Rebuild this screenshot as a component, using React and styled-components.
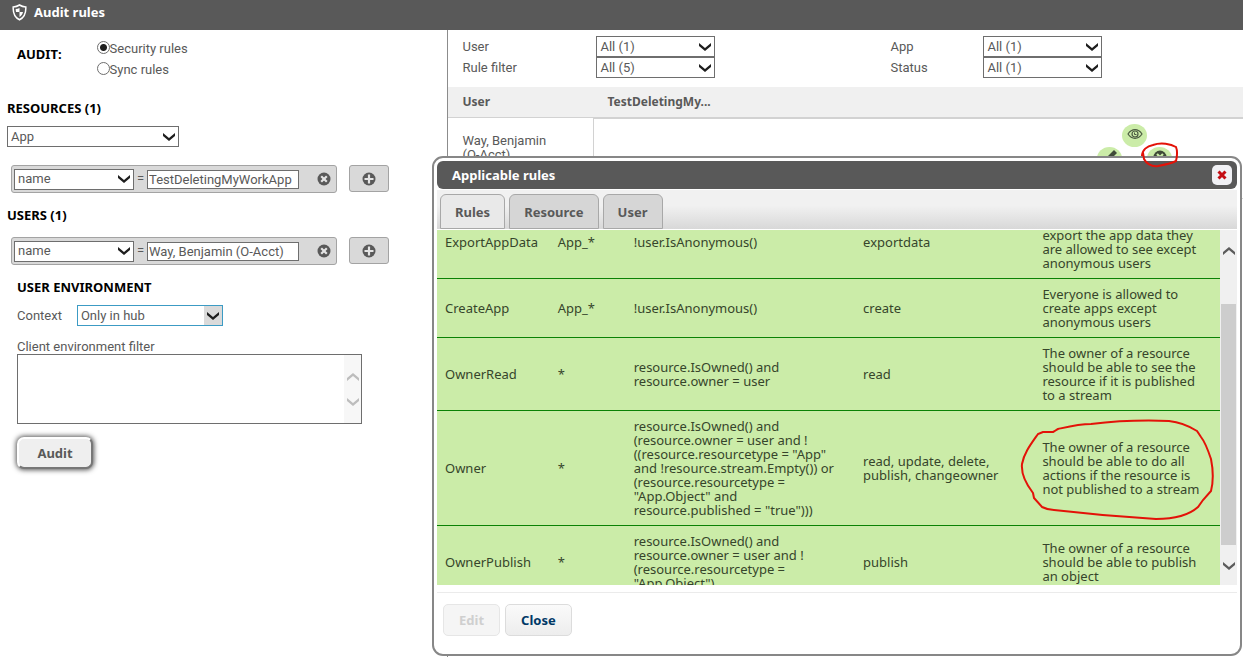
import { useLayoutEffect, useRef } from 'react';
import styled, { createGlobalStyle } from 'styled-components';

const COLORS = {
  Bar: '#595959',
  Text: '#595959',
  Border: '#6e6e6e',
  Chip: '#d9d9d9',
  Green: '#cbeca8',
  GreenLine: '#0a8205',
  Red: '#e31208',
};

const RULES = [
  {
    name: 'ExportAppData',
    filter: 'App_*',
    condition: '!user.IsAnonymous()',
    actions: 'exportdata',
    description:
      'Everyone is allowed to\nexport the app data they\nare allowed to see except\nanonymous users',
  },
  {
    name: 'CreateApp',
    filter: 'App_*',
    condition: '!user.IsAnonymous()',
    actions: 'create',
    description: 'Everyone is allowed to\ncreate apps except\nanonymous users',
  },
  {
    name: 'OwnerRead',
    filter: '*',
    condition: 'resource.IsOwned() and\nresource.owner = user',
    actions: 'read',
    description:
      'The owner of a resource\nshould be able to see the\nresource if it is published\nto a stream',
  },
  {
    name: 'Owner',
    filter: '*',
    condition:
      'resource.IsOwned() and\n(resource.owner = user and !\n((resource.resourcetype = "App"\nand !resource.stream.Empty()) or\n(resource.resourcetype =\n"App.Object" and\nresource.published = "true")))',
    actions: 'read, update, delete,\npublish, changeowner',
    description:
      'The owner of a resource\nshould be able to do all\nactions if the resource is\nnot published to a stream',
  },
  {
    name: 'OwnerPublish',
    filter: '*',
    condition:
      'resource.IsOwned() and\nresource.owner = user and !\n(resource.resourcetype =\n"App.Object")',
    actions: 'publish',
    description:
      'The owner of a resource\nshould be able to publish\nan object',
  },
];

function Chevron({ up, color = '#1e1e1e' }) {
  return (
    <svg width="12" height="8" viewBox="0 0 12 8" aria-hidden="true">
      <path
        d={up ? 'M0 8V5L6 0l6 5v3L6 3z' : 'M0 0v3l6 5 6-5V0L6 5z'}
        fill={color}
      />
    </svg>
  );
}

function Select({ id, label, value, width, active }) {
  return (
    <SelectBox $width={width} $active={active}>
      <NativeSelect id={id} aria-label={label} defaultValue={value}>
        <option>{value}</option>
      </NativeSelect>
      <SelectArrow $active={active}>
        <Chevron />
      </SelectArrow>
    </SelectBox>
  );
}

function Condition({ label, value }) {
  return (
    <ConditionRow>
      <ConditionBox>
        <Select label={`${label} property`} value="name" width={120} />
        <Equals>=</Equals>
        <ValueInput aria-label={`${label} value`} defaultValue={value} />
        <RemoveButton aria-label={`Remove ${label} condition`}>
          <svg width="14" height="14" viewBox="0 0 14 14">
            <circle cx="7" cy="7" r="6.5" fill={COLORS.Bar} />
            <path
              d="M4.2 4.2l5.6 5.6M9.8 4.2L4.2 9.8"
              stroke="#e4e4e4"
              strokeWidth="2.2"
            />
          </svg>
        </RemoveButton>
      </ConditionBox>
      <AddButton aria-label={`Add ${label} condition`}>
        <svg width="14" height="14" viewBox="0 0 14 14">
          <circle cx="7" cy="7" r="6.5" fill={COLORS.Bar} />
          <path d="M7 2.5v9M2.5 7h9" stroke="#e4e4e4" strokeWidth="2.2" />
        </svg>
      </AddButton>
    </ConditionRow>
  );
}

function Sidebar() {
  return (
    <Side>
      <AuditType>
        <AuditLegend>AUDIT:</AuditLegend>
        <div>
          <RadioLabel>
            <Radio name="audit" defaultChecked />
            Security rules
          </RadioLabel>
          <RadioLabel>
            <Radio name="audit" />
            Sync rules
          </RadioLabel>
        </div>
      </AuditType>

      <Heading>RESOURCES (1)</Heading>
      <ResourceType>
        <Select label="Resource type" value="App" width={172} />
      </ResourceType>
      <Condition label="resource" value="TestDeletingMyWorkApp" />

      <Heading>USERS (1)</Heading>
      <Condition label="user" value="Way, Benjamin (O-Acct)" />

      <Environment>
        <Heading>USER ENVIRONMENT</Heading>
        <ContextRow>
          <label htmlFor="context">Context</label>
          <Select id="context" value="Only in hub" width={146} active />
        </ContextRow>
        <FilterLabel htmlFor="env-filter">Client environment filter</FilterLabel>
        <FilterBox>
          <FilterArea id="env-filter" />
          <FilterGutter>
            <Chevron up color="#bdbdbd" />
            <Chevron color="#bdbdbd" />
          </FilterGutter>
        </FilterBox>
        <AuditButton>Audit</AuditButton>
      </Environment>
    </Side>
  );
}

function Results() {
  return (
    <Pane>
      <Filters>
        <label htmlFor="f-user">User</label>
        <Select id="f-user" value="All (1)" width={119} />
        <label htmlFor="f-app">App</label>
        <Select id="f-app" value="All (1)" width={119} />
        <label htmlFor="f-rule">Rule filter</label>
        <Select id="f-rule" value="All (5)" width={119} />
        <label htmlFor="f-status">Status</label>
        <Select id="f-status" value="All (1)" width={119} />
      </Filters>
      <Matrix>
        <thead>
          <tr>
            <th>User</th>
            <th>TestDeletingMy...</th>
          </tr>
        </thead>
        <tbody>
          <tr>
            <td>
              Way, Benjamin
              <br />
              (O-Acct)
            </td>
            <td>
              <Actions>
                <ActionButton $area="view" aria-label="Read">
                  <svg width="16" height="12" viewBox="0 0 16 12">
                    <path
                      d="M1 6c2-3 4.5-4.3 7-4.3S13 3 15 6c-2 3-4.5 4.3-7 4.3S3 9 1 6z"
                      fill="none"
                      stroke="#4a5a40"
                      strokeWidth="1.2"
                    />
                    <circle
                      cx="8"
                      cy="6"
                      r="3"
                      fill="none"
                      stroke="#4a5a40"
                      strokeWidth="1.2"
                    />
                    <path d="M7.5 4.5v2h2" fill="none" stroke="#4a5a40" />
                  </svg>
                </ActionButton>
                <ActionButton $area="edit" aria-label="Update">
                  <svg width="16" height="16" viewBox="0 0 16 16">
                    <path d="M1 15l1.5-4.5L12 1l3 3-9.500 9.500z" fill="#3f4a38" />
                  </svg>
                </ActionButton>
                <ActionButton $area="remove" aria-label="Delete">
                  <svg width="14" height="14" viewBox="0 0 14 14">
                    <circle cx="7" cy="7" r="6.5" fill="#3f4a38" />
                    <path
                      d="M4 4l6 6M10 4l-6 6"
                      stroke={COLORS.Green}
                      strokeWidth="2.2"
                    />
                  </svg>
                </ActionButton>
              </Actions>
            </td>
          </tr>
        </tbody>
      </Matrix>
    </Pane>
  );
}

function RulesTable() {
  const viewport = useRef(null);

  useLayoutEffect(() => {
    viewport.current.scrollTop = 24;
  }, []);

  return (
    <Scroller>
      <Viewport ref={viewport}>
        <Table>
          <colgroup>
            <col width="14.4%" />
            <col width="9.7%" />
            <col width="29.3%" />
            <col width="22.9%" />
            <col />
          </colgroup>
          <tbody>
            {RULES.map((rule) => (
              <tr key={rule.name}>
                <td>{rule.name}</td>
                <td>{rule.filter}</td>
                <td>{rule.condition}</td>
                <td>{rule.actions}</td>
                <td>{rule.description}</td>
              </tr>
            ))}
          </tbody>
        </Table>
      </Viewport>
      <ScrollTrack aria-hidden="true">
        <Chevron up color="#5c5c5c" />
        <ScrollThumb />
        <Chevron color="#5c5c5c" />
      </ScrollTrack>
    </Scroller>
  );
}

function RulesDialog() {
  return (
    <Dialog role="dialog" aria-labelledby="dialog-title">
      <TitleBar>
        <h2 id="dialog-title">Applicable rules</h2>
        <CloseIcon aria-label="Close dialog">
          <svg width="10" height="10" viewBox="0 0 10 10">
            <path
              d="M1.5 1.5l7 7M8.5 1.5l-7 7"
              stroke="#c40d14"
              strokeWidth="3"
            />
          </svg>
        </CloseIcon>
      </TitleBar>
      <Tabs role="tablist">
        <Tab role="tab" aria-selected="true" $selected>
          Rules
        </Tab>
        <Tab role="tab">Resource</Tab>
        <Tab role="tab">User</Tab>
      </Tabs>
      <RulesTable />
      <Footer>
        <FooterButton disabled>Edit</FooterButton>
        <FooterButton>Close</FooterButton>
      </Footer>

      <SmallMark width="40" height="28" viewBox="0 0 40 28">
        <path d="M2 15C2 9 7 5 13 4c8-3 18-1 23 2 2 5 1 10 0 14-6 3-12 4-18 5C11 26 6 22 4 18L3 12" />
      </SmallMark>
      <LargeMark width="200" height="106" viewBox="0 0 200 106">
        <path d="M25 13l-5 2C13 25 6 34 4 45c-1 10 4 20 11 29l1 5 8 9c4 2 8 3 12 3 34 4 68 7 102 9 16 0 32-3 42-12l5-7 8-9c3-12 2-22 0-32-3-9-6-17-10-22l-4-6c-8-5-18-9-28-10-26-1-53 0-78 3-12 0-24 3-33 5-2 1-3 2-5 3z" />
      </LargeMark>
    </Dialog>
  );
}

function App() {
  return (
    <Page>
      <GlobalStyle />
      <TopBar>
        <svg width="15" height="17" viewBox="0 0 15 17" aria-hidden="true">
          <path
            d="M7.5 1C5.500 2.300 3.500 2.900 1.200 3c-.3 6 1.300 10.500 6.300 12.800C12.500 13.500 14.100 9 13.800 3 11.500 2.900 9.500 2.300 7.500 1z"
            fill="none"
            stroke="#fff"
            strokeWidth="1.5"
          />
          <path
            d="M7.5 4v4H4c-.2-1.200-.3-2-.3-3 1.500-.1 2.600-.4 3.800-1zM7.500 8H11c-.4 2-1.500 3.700-3.500 5z"
            fill="#fff"
          />
        </svg>
        <h1>Audit rules</h1>
      </TopBar>
      <Main>
        <Sidebar />
        <Results />
      </Main>
      <RulesDialog />
    </Page>
  );
}

const GlobalStyle = createGlobalStyle`
  * {
    box-sizing: border-box;
  }

  body {
    margin: 0;
    background: #fff;
    color: ${COLORS.Text};
    font: 13px/14px Roboto, sans-serif;
  }

  h1, h2, h3 {
    margin: 0;
  }

  button, input, select, textarea {
    margin: 0;
    color: inherit;
    font: inherit;
  }

  svg {
    display: block;
  }
`;

const Page = styled.div`
  position: relative;
  display: flex;
  flex-direction: column;
  min-height: 100vh;
`;

const TopBar = styled.header`
  display: flex;
  align-items: center;
  gap: 7px;
  height: 30px;
  padding: 0 12px 6px;
  background: ${COLORS.Bar};
  color: #fff;

  h1 {
    font: bold 13px/16px 'Noto Sans', sans-serif;
  }
`;

const Main = styled.main`
  flex: 1;
  display: grid;
  grid-template-columns: 36% 1fr;
`;

const Side = styled.section`
  padding: 8px 7px;
`;

const AuditType = styled.div`
  display: flex;
  gap: 35px;
  padding: 0 10px 6px;
`;

const Heading = styled.h3`
  padding: 14px 0 10px;
  color: #000;
  font: bold 13px/16px 'Noto Sans', sans-serif;
`;

const AuditLegend = styled(Heading)`
  padding: 8px 0 0;
`;

const RadioLabel = styled.label`
  display: flex;
  align-items: center;
  height: 21px;
`;

const Radio = styled.input.attrs({ type: 'radio' })`
  appearance: none;
  width: 13px;
  height: 13px;
  margin-bottom: 3px;
  border: 1px solid ${COLORS.Border};
  border-radius: 50%;

  &:checked {
    background: radial-gradient(circle, #1e1e1e 3px, #fff 4px);
  }
`;

const ResourceType = styled.div`
  padding-bottom: 14px;
`;

const SelectBox = styled.span`
  position: relative;
  display: block;
  flex: none;
  width: ${(p) => p.$width}px;
  height: 21px;
  border: 1px solid ${(p) => (p.$active ? '#3c9bc4' : COLORS.Border)};
  background: #fff;
`;

const NativeSelect = styled.select`
  appearance: none;
  display: block;
  width: 100%;
  height: 100%;
  padding: 0 20px 0 3px;
  border: none;
  background: transparent;
`;

const SelectArrow = styled.span`
  position: absolute;
  top: 0;
  right: 0;
  bottom: 0;
  display: grid;
  place-items: center;
  width: 18px;
  background: ${(p) => (p.$active ? '#dadada' : 'transparent')};
  pointer-events: none;
`;

const ConditionRow = styled.div`
  display: flex;
  gap: 12px;
  padding: 4px 4px 0;
`;

const ConditionBox = styled.div`
  display: flex;
  align-items: center;
  width: 326px;
  height: 28px;
  padding: 0 2px;
  border: 1px solid #a3a3a3;
  border-radius: 3px;
  background: ${COLORS.Chip};
`;

const Equals = styled.span`
  width: 13px;
  text-align: center;
`;

const ValueInput = styled.input`
  width: 152px;
  height: 19px;
  padding: 0 1px;
  border: 1px solid ${COLORS.Border};
  background: #fff;
`;

const RemoveButton = styled.button`
  margin-left: auto;
  padding: 0 3px;
  border: none;
  background: transparent;
`;

const AddButton = styled.button`
  display: grid;
  place-items: center;
  width: 40px;
  height: 27px;
  padding: 0;
  border: 1px solid #a3a3a3;
  border-radius: 3px;
  background: ${COLORS.Chip};
`;

const Environment = styled.div`
  padding: 0 10px;
`;

const ContextRow = styled.div`
  display: flex;
  align-items: center;
  gap: 15px;
`;

const FilterLabel = styled.label`
  display: block;
  margin-top: 14px;
`;

const FilterBox = styled.div`
  display: flex;
  width: 345px;
  height: 70px;
  border: 1px solid ${COLORS.Border};
`;

const FilterArea = styled.textarea`
  flex: 1;
  border: none;
  resize: none;
`;

const FilterGutter = styled.div`
  display: flex;
  flex-direction: column;
  align-items: center;
  justify-content: center;
  gap: 17px;
  width: 17px;
  background: #f7f7f7;
`;

const AuditButton = styled.button`
  width: 76px;
  height: 32px;
  margin-top: 13px;
  border: 2px solid;
  border-color: #fff #777 #777 #fff;
  border-radius: 7px;
  background: #efefef;
  box-shadow: 0 0 5px 1px #555;
  font: bold 13px/16px 'Noto Sans', sans-serif;
`;

const Pane = styled.section`
  border-left: 1px solid #8c8c8c;
`;

const Filters = styled.div`
  display: grid;
  grid-template-columns: 134px 294px 93px 1fr;
  align-items: center;
  padding: 6px 14px 9px;
`;

const Matrix = styled.table`
  width: 100%;
  border-spacing: 0;
  text-align: left;

  th {
    height: 31px;
    padding: 0 14px;
    border-bottom: 1px solid #d2d2d2;
    background: #f0f0f0;
    font: bold 12px/14px 'Noto Sans', sans-serif;
  }

  td {
    height: 81px;
    padding: 16px 14px;
    border-bottom: 1px solid #d2d2d2;
    vertical-align: top;
  }

  th:first-child,
  td:first-child {
    width: 145px;
  }

  td + td {
    padding: 5px 71px 5px 14px;
    border-top: 1px solid #d2d2d2;
    border-left: 1px solid #d2d2d2;
  }
`;

const Actions = styled.div`
  display: grid;
  grid-template: '. view .' 23px 'edit . remove' 23px / 25px 25px 25px;
  justify-content: end;
`;

const ActionButton = styled.button`
  grid-area: ${(p) => p.$area};
  display: grid;
  place-items: center;
  padding: 0 0 4px;
  border: none;
  border-radius: 50%;
  background: ${COLORS.Green};
`;

const Dialog = styled.div`
  position: absolute;
  top: 156px;
  right: 1px;
  left: 432px;
  padding: 3px;
  border: 2px solid #878787;
  border-radius: 11px;
  background: #fff;
`;

const TitleBar = styled.div`
  display: flex;
  align-items: center;
  justify-content: space-between;
  height: 28px;
  padding: 0 5px 0 15px;
  border-radius: 6px;
  background: ${COLORS.Bar};
  color: #fff;

  h2 {
    font: bold 13px/16px 'Noto Sans', sans-serif;
  }
`;

const CloseIcon = styled.button`
  display: grid;
  place-items: center;
  width: 20px;
  height: 20px;
  padding: 0;
  border: none;
  border-radius: 5px;
  background: #f0f0f4;
`;

const Tabs = styled.div`
  display: flex;
  align-items: flex-end;
  gap: 4px;
  height: 39px;
  margin: 1px 0;
  padding: 0 3px;
  background: linear-gradient(#f1f1f1 40%, #d8d8d8);
`;

const Tab = styled.button`
  height: 35px;
  padding: 0 14px;
  border: 1px solid #a8a8a8;
  border-radius: 6px 6px 0 0;
  background: ${(p) => (p.$selected ? '#e9e9e9' : '#d6d6d6')};
  font: bold 13px/16px 'Noto Sans', sans-serif;
`;

const Scroller = styled.div`
  display: flex;
  height: 355px;
`;

const Viewport = styled.div`
  flex: 1;
  overflow-y: auto;
  scrollbar-width: none;
  background: ${COLORS.Green};
`;

const Table = styled.table`
  width: 100%;
  table-layout: fixed;
  border-spacing: 0;
  color: #36452b;
  font: 13px/14px 'Noto Sans', sans-serif;

  td {
    padding: 8px;
    border-bottom: 1px solid ${COLORS.GreenLine};
    white-space: pre;
  }
`;

const ScrollTrack = styled.div`
  display: flex;
  flex-direction: column;
  align-items: center;
  width: 17px;
  padding: 17px 1px 15px;
  background: #f0f0f0;
`;

const ScrollThumb = styled.div`
  width: 15px;
  height: 241px;
  margin: 49px 0 auto;
  background: #cdcdcd;
`;

const Footer = styled.div`
  display: flex;
  gap: 5px;
  margin-top: 7px;
  padding: 11px 6px 15px;
  border-top: 1px solid #ebebeb;
`;

const FooterButton = styled.button`
  height: 32px;
  padding: 0 15px;
  border: 1px solid #dcdcdc;
  border-radius: 5px;
  background: linear-gradient(#fafafa, #ededed);
  color: #003866;
  font: bold 13px/16px 'Noto Sans', sans-serif;

  &:disabled {
    border-color: #e6e6e6;
    background: #f5f5f5;
    color: #cfcfcf;
  }
`;

const Mark = styled.svg`
  position: absolute;
  fill: none;
  stroke: ${COLORS.Red};
  stroke-width: 2;
  pointer-events: none;
`;

const SmallMark = styled(Mark)`
  top: -17px;
  right: 60px;
`;

const LargeMark = styled(Mark)`
  top: 261px;
  right: 22px;
`;

export default App;
